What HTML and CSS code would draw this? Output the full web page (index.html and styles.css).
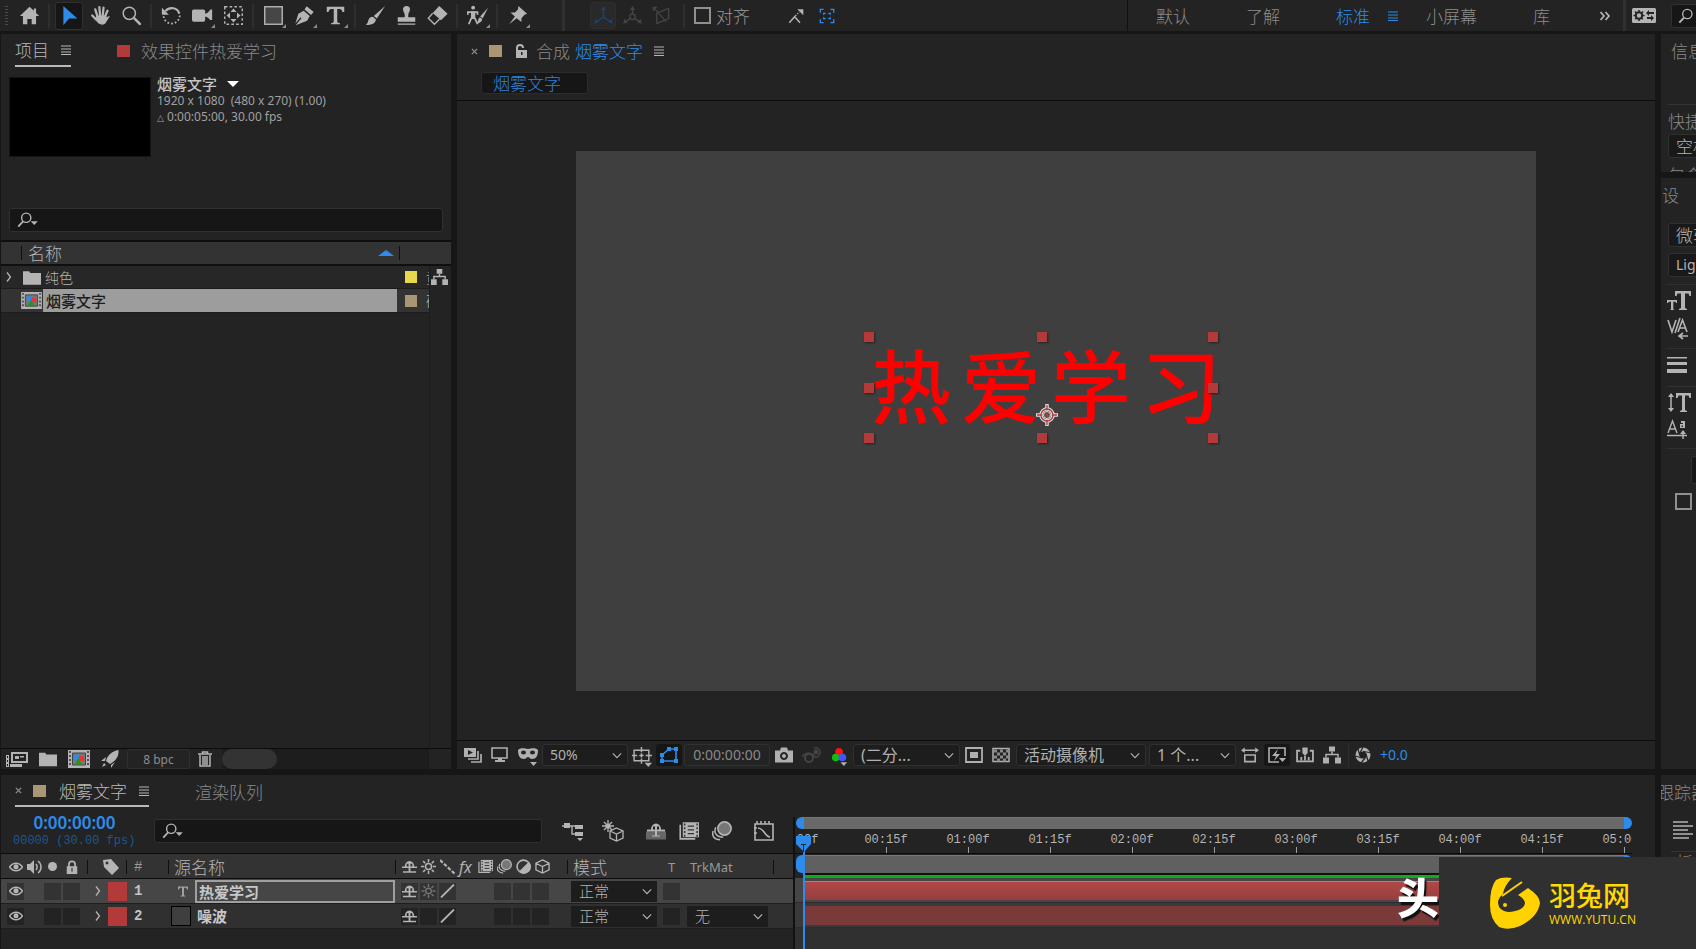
FILE: index.html
```html
<!DOCTYPE html>
<html lang="zh-CN">
<head>
<meta charset="utf-8">
<title>烟雾文字</title>
<link rel="stylesheet" href="styles.css">
</head>
<body>
<svg class="defs" aria-hidden="true">
  <symbol id="home" viewBox="0 0 24 24"><path fill="currentColor" d="M12 2 1 12.5h3.500V22h5v-6h5v6h5v-9.500H23L19.500 9V4H17v2.500z"/></symbol>
  <symbol id="arrow" viewBox="0 0 24 24"><path fill="currentColor" d="M5 1v22l6.500-7.500H21z"/></symbol>
  <symbol id="hand" viewBox="0 0 24 24"><path fill="none" stroke="currentColor" stroke-width="2.600" stroke-linecap="round" d="M8.500 13 6 5M11.500 12l-.8-9.500M14.500 12l1-9M17 13.500l3-7M7.500 17 2.500 12"/><path fill="currentColor" d="M7 12h11.500l.5 2 3-1.500c1 .5 0 1.500-1 3-2 3-3 7-7 7-3 0-5.500-1.500-7-5z"/></symbol>
  <symbol id="lens" viewBox="0 0 24 24"><circle cx="9.500" cy="9.500" r="7" fill="none" stroke="currentColor" stroke-width="1.700"/><path stroke="currentColor" stroke-width="3" stroke-linecap="round" d="m15.500 15.500 6 6"/></symbol>
  <symbol id="rotate" viewBox="0 0 24 24"><path fill="none" stroke="currentColor" stroke-width="2.400" d="M5 7C10 1.500 19 3 21 10"/><path fill="none" stroke="currentColor" stroke-width="2" stroke-dasharray="2 2.300" d="M21.500 12C21 20 12 24 6 19c-2-2-3-4-3-7"/><path fill="currentColor" d="M1 3v8h8z"/></symbol>
  <symbol id="camera" viewBox="0 0 24 24"><rect x="0" y="5" width="15" height="14" rx="2" fill="currentColor"/><path fill="currentColor" d="M14 10c3 0 5-2 7-5h2v12h-2c-2-2-4-4-7-4z"/></symbol>
  <symbol id="panb" viewBox="0 0 24 24"><path fill="none" stroke="currentColor" stroke-width="1.600" stroke-dasharray="3 2.500" d="M2 2h20v20H2z"/><path fill="currentColor" d="m12 4 3.500 4h-7zM12 20l3.500-4h-7zM4 12l4-3.500v7zM20 12l-4-3.500v7z"/></symbol>
  <symbol id="rect" viewBox="0 0 24 24"><rect x="2" y="2" width="20" height="20" fill="#464646" stroke="currentColor" stroke-width="1.600"/></symbol>
  <symbol id="pen" viewBox="0 0 24 24"><path fill="currentColor" d="M14.500 1.500 22.500 8l-3 3.500-7.500-6.500zM11 6.500l7 6L15 18 2 23l6.500-8-1-1L1.500 21 5 10z"/></symbol>
  <symbol id="type" viewBox="0 0 24 24"><path fill="currentColor" d="M2 2h20v6h-2c-.5-2.500-1.500-3.500-3.500-3.500h-2.500v14c0 1.500 1 2 3 2V22H7v-1.500c2 0 3-.5 3-2v-14H7.500C5.500 4.500 4.500 5.500 4 8H2z"/></symbol>
  <symbol id="brush" viewBox="0 0 24 24"><path fill="currentColor" d="M23 1 13.500 15.500 10 12.500zM9 13.500l3.500 3C12 21 7 23.500 1 22.500c3-2 2-4 3.500-6.500C5.500 14.500 7 13.500 9 13.500z"/></symbol>
  <symbol id="stamp" viewBox="0 0 24 24"><path fill="currentColor" d="M12 1a4 4 0 0 1 4 4c0 2-2 4-2 6v3h8v5H2v-5h8v-3c0-2-2-4-2-6a4 4 0 0 1 4-4zM2 21h20v1.500H2z"/></symbol>
  <symbol id="eraser" viewBox="0 0 24 24"><path fill="currentColor" d="m14 1 9.500 9L16 17.500 6.500 9z"/><path fill="none" stroke="currentColor" stroke-width="1.600" d="M6.500 9.500 1.500 15l7 7 6-6"/></symbol>
  <symbol id="roto" viewBox="0 0 24 24"><circle cx="7" cy="3" r="2.200" fill="currentColor"/><path fill="none" stroke="currentColor" stroke-width="2" d="M1 11V8h11v3M2 22l3-7M12 22l-3-7"/><path fill="currentColor" d="M4.500 7h5v9h-5zM24 3 18 15l-3-2zM14.500 14l3 2c-1 4-4 5-6 5 1-2 1-5 3-7z"/></symbol>
  <symbol id="pin" viewBox="0 0 24 24"><path fill="currentColor" d="M13 1 23 10l-3 1-3.500 4 0 4.500L11 15 2.500 22 9 13 4 8.500h5L12.500 5z"/></symbol>
  <symbol id="axis" viewBox="0 0 24 24"><path fill="none" stroke="currentColor" stroke-width="1.800" d="M12 4v10M12 14 3 20M12 14l9 6"/><path fill="currentColor" d="m12 0 3.500 5h-7zM0 22l2-6 4 5zM24 22l-2-6-4 5z"/></symbol>
  <symbol id="axis2" viewBox="0 0 24 24"><path fill="none" stroke="currentColor" stroke-width="1.800" d="M12 4v6M9 16l-6 4M15 16l6 4"/><circle cx="12" cy="13.500" r="3.500" fill="none" stroke="currentColor" stroke-width="1.800"/><path fill="currentColor" d="m12 0 3.500 5h-7zM0 22l2-6 4 5zM24 22l-2-6-4 5z"/></symbol>
  <symbol id="axis3" viewBox="0 0 24 24"><path fill="none" stroke="currentColor" stroke-width="1.700" d="M6 9 21 3v13L6 22zM3 3l15 17"/><path fill="currentColor" d="M1 1h6L1 7z"/></symbol>
  <symbol id="snap" viewBox="0 0 24 24"><path fill="none" stroke="currentColor" stroke-width="2.200" d="m2 22 8-9 8 9"/><path fill="none" stroke="currentColor" stroke-width="2" stroke-dasharray="2 2" d="m11 12 6-6"/><path fill="currentColor" d="M14 2h9v9z"/></symbol>
  <symbol id="grid4" viewBox="0 0 24 24"><path fill="none" stroke="currentColor" stroke-width="2" d="M2 7V2h5M17 2h5v5M22 17v5h-5M7 22H2v-5M7 10V8h3M14 8h3v2M17 14v2h-3M10 16H7v-2"/></symbol>
  <symbol id="more" viewBox="0 0 24 24"><path fill="none" stroke="currentColor" stroke-width="3.500" d="m3 4 7 8-7 8M13 4l7 8-7 8"/></symbol>
  <symbol id="wset" viewBox="0 0 24 15"><rect width="24" height="15" rx="1.500" fill="#b4b4b4"/><circle cx="7" cy="7.500" r="3.200" fill="none" stroke="#232323" stroke-width="2"/><path stroke="#232323" stroke-width="1.500" stroke-dasharray="2 7" d="M7 2v11M1.500 7.500h11M3 3.500l8 8M11 3.500l-8 8"/><path fill="#232323" d="m14 5 3-3v2h5v2h-5v2zM22 10l-3-3v2h-4v2h4v2z"/></symbol>
  <symbol id="find" viewBox="0 0 24 18"><circle cx="10" cy="6.500" r="5.200" fill="none" stroke="currentColor" stroke-width="1.600"/><path stroke="currentColor" stroke-width="2" d="M6.500 10.500 1 16.500"/><path fill="currentColor" d="M15 10.500h8l-4 4z"/></symbol>
  <symbol id="lensr" viewBox="0 0 24 24"><circle cx="14" cy="9" r="7" fill="none" stroke="currentColor" stroke-width="2"/><path stroke="currentColor" stroke-width="3" d="m9 14.500-7 7.500"/></symbol>
  <symbol id="menu" viewBox="0 0 10 10"><path stroke="currentColor" stroke-width="1.200" d="M0 1h10M0 4h10M0 7h10M0 9.500h10"/></symbol>
  <symbol id="chev" viewBox="0 0 12 8"><path fill="none" stroke="currentColor" stroke-width="1.400" d="m1 1.500 5 5 5-5"/></symbol>
  <symbol id="chevr" viewBox="0 0 8 12"><path fill="none" stroke="currentColor" stroke-width="1.300" d="m2 1.500 3.500 4.500L2 10.500"/></symbol>
  <symbol id="close" viewBox="0 0 8 8"><path stroke="currentColor" stroke-width="1.600" d="m1 1 6 6M7 1 1 7"/></symbol>
  <symbol id="unlock" viewBox="0 0 14 14"><path fill="none" stroke="currentColor" stroke-width="2" d="M3 6V4a3 3 0 0 1 6 0"/><path fill="currentColor" fill-rule="evenodd" d="M2 6h11v8H2zM7 8v3h1.500V8z"/></symbol>
  <symbol id="lock" viewBox="0 0 14 16"><path fill="none" stroke="currentColor" stroke-width="2" d="M3.500 8V5a3.500 3.500 0 0 1 7 0v3"/><path fill="currentColor" fill-rule="evenodd" d="M1 7h12v9H1zM6.300 9v4h1.400V9z"/></symbol>
  <symbol id="folder" viewBox="0 0 20 16"><path fill="currentColor" d="M0 1h7l1 2h12v13H0z"/></symbol>
  <symbol id="comp" viewBox="0 0 22 18"><path fill="#b4b4b4" d="M0 0h22v18H0z"/><path stroke="#333" stroke-width="1.500" stroke-dasharray="2 2" d="M2 1v16M20 1v16"/><path fill="#777" stroke="#444" d="M4.500 3h13v12h-13z"/><circle cx="8.500" cy="7" r="2.800" fill="#2d8ceb"/><path fill="#e33" d="M11 6h5v5h-5z"/><path fill="#1a9a1a" d="m10.500 8 3.500 6.500H7z"/></symbol>
  <symbol id="tree" viewBox="0 0 18 17"><path fill="currentColor" d="M6 0h6v5H6zM0 11h6v6H0zM12 11h6v6h-6z"/><path fill="none" stroke="currentColor" stroke-width="1.500" d="M9 5v3M3 11V8h12v3"/></symbol>
  <symbol id="footage" viewBox="0 0 22 16"><path fill="none" stroke="currentColor" stroke-width="2" d="M6 2h15v9H6z"/><path fill="currentColor" d="M9 5h4v3H9zM14 5h4v1.500h-4zM0 4h3v12H0zM4 13h12v3H4z"/><path stroke="#232323" stroke-dasharray="2 2" d="M1.500 5v11"/></symbol>
  <symbol id="rocket" viewBox="0 0 18 18"><path fill="currentColor" d="M17.500 0C18 6 15 11 9 14l-4-3C6 6 11 1 17.500 0zM5 7 0 11h4zM10 15v3l4-6zM3 13l2 2-4 2z"/></symbol>
  <symbol id="trash" viewBox="0 0 14 16"><path fill="none" stroke="currentColor" stroke-width="1.500" d="M0 3h14M4.500 3V1h5v2M2 4v11h10V4M5 5v9M7 5v9M9 5v9"/></symbol>
  <symbol id="stack" viewBox="0 0 18 16"><path fill="currentColor" fill-rule="evenodd" d="M0 1h12v9H0zM4 3v5l5-2.500z"/><path fill="none" stroke="currentColor" stroke-width="1.700" d="M14 4v8H4M17 7v8H7"/></symbol>
  <symbol id="monitor" viewBox="0 0 18 16"><path fill="none" stroke="currentColor" stroke-width="1.600" d="M1 1h15v10H1z"/><path fill="currentColor" d="M7 11h4v2h3v2H4v-2h3z"/></symbol>
  <symbol id="mask" viewBox="0 0 20 18"><path fill="currentColor" fill-rule="evenodd" d="M0 2C4-1 7 1 10 1s6-2 10 1c0 6-2 9-6 9-2 0-3-2-4-2s-2 2-4 2C2 11 0 8 0 2zm3 2.500a2.500 2 0 1 0 5 0 2.500 2 0 1 0-5 0zm9 0a2.500 2 0 1 0 5 0 2.500 2 0 1 0-5 0zM12 14h7l-3.500 4z"/></symbol>
  <symbol id="safe" viewBox="0 0 19 19"><path fill="none" stroke="currentColor" stroke-width="1.400" d="M2 3h14v10H2zM9 0v5M9 11v5M0 8h5M13 8h6M7 8h4M9 6v4"/><path fill="currentColor" d="M12 15h7l-3.500 4z"/></symbol>
  <symbol id="shape" viewBox="0 0 18 16"><path fill="none" stroke="currentColor" stroke-width="1.600" d="M2 14h14V2H9L2 8z"/><path fill="currentColor" d="M0 12h4v4H0zM14 12h4v4h-4zM14 0h4v4h-4zM7 0h4v4H7zM0 6h4v4H0z"/></symbol>
  <symbol id="photo" viewBox="0 0 18 15"><path fill="currentColor" fill-rule="evenodd" d="M0 3h5l1-3h6l1 3h5v12H0zM9 4.500a4 4 0 1 0 .01 0zM9 6.500a2 2 0 1 1-.01 0z"/></symbol>
  <symbol id="ghost" viewBox="0 0 20 16"><circle cx="7" cy="11" r="4" fill="none" stroke="currentColor" stroke-width="2"/><path fill="none" stroke="currentColor" stroke-width="1.500" d="M0 10c3-5 10-5 13 0M13 10c3 1 5-2 5-5s-3-5-6-4"/><circle cx="14" cy="5" r="2.500" fill="currentColor"/></symbol>
  <symbol id="rgb" viewBox="0 0 17 19"><circle cx="7.500" cy="4" r="4" fill="#f11"/><circle cx="4" cy="10" r="4" fill="#1b1"/><circle cx="11" cy="10" r="4" fill="#45f"/><path fill="currentColor" d="M9 15h7l-3.500 4z"/></symbol>
  <symbol id="roi" viewBox="0 0 18 16"><path fill="none" stroke="currentColor" stroke-width="1.800" d="M1 1h16v14H1z"/><path fill="currentColor" d="M5 5h8v6H5z"/></symbol>
  <symbol id="check" viewBox="0 0 18 15"><path fill="none" stroke="currentColor" stroke-width="1.500" d="M1 1h16v13H1z"/><path stroke="#888" stroke-width="3" stroke-dasharray="3 3" d="M2 3.500h15M5 6.500h12M2 9.500h15M5 12.500h12"/></symbol>
  <symbol id="par" viewBox="0 0 19 16"><path fill="none" stroke="currentColor" stroke-width="1.700" d="M2 3h15M4 8h11v7H4z"/><path fill="currentColor" d="m0 3 4-3v6zM19 3l-4-3v6z"/></symbol>
  <symbol id="fast" viewBox="0 0 18 16"><path fill="none" stroke="currentColor" stroke-width="1.600" d="M11 15H1V1h16v8"/><path fill="currentColor" d="m10 2-6 7h4l-2 5 6-7H8zM11 11h7l-3.500 4z"/></symbol>
  <symbol id="tlbtn" viewBox="0 0 17 14"><path fill="none" stroke="currentColor" stroke-width="1.700" d="M4 3H1v10h15V3h-3M5 9v3M8.500 8v4M12 9v3"/><path fill="currentColor" d="M6 0h5v5L8.500 8 6 5z"/></symbol>
  <symbol id="shutter" viewBox="0 0 16 16"><circle cx="8" cy="8" r="5.500" fill="none" stroke="currentColor" stroke-width="4"/><path stroke="#232323" stroke-width="1.200" d="M5 6 8 0M8 4.500l7 1M11 7l2 7M10.500 10.500 6 16M7 11 0 9M5 9 3 2"/></symbol>
  <symbol id="eye" viewBox="0 0 14 10"><path fill="none" stroke="currentColor" stroke-width="1.500" d="M.5 5C4 0 10 0 13.500 5 10 10 4 10 .5 5z"/><circle cx="7" cy="4.800" r="2.500" fill="currentColor"/></symbol>
  <symbol id="sound" viewBox="0 0 16 14"><path fill="currentColor" d="M0 4h3l4-4v14l-4-4H0z"/><path fill="none" stroke="currentColor" stroke-width="1.500" d="M9 4c1.500 2 1.500 4 0 6M11 1c4 3 4 9 0 12"/></symbol>
  <symbol id="tag" viewBox="0 0 16 16"><path fill="currentColor" fill-rule="evenodd" d="M0 1 8 0l8 9-7 7-8-8zM4 2.500a1.500 1.500 0 1 0 .01 0z"/></symbol>
  <symbol id="shy" viewBox="0 0 16 14"><path fill="currentColor" fill-rule="evenodd" d="M3 7a5 6 0 0 1 10 0h3v1.500H9V12h6v1.600H1V12h6V8.500H0V7zM5 4v3h2V4zM9 4v3h2V4z"/></symbol>
  <symbol id="sun" viewBox="0 0 14 14"><circle cx="7" cy="7" r="2.800" fill="none" stroke="currentColor" stroke-width="1.400"/><path stroke="currentColor" stroke-width="1.400" d="M7 0v3M7 11v3M0 7h3M11 7h3M2 2l2 2M10 10l2 2M12 2l-2 2M4 10l-2 2"/></symbol>
  <symbol id="qual" viewBox="0 0 14 14"><path fill="none" stroke="currentColor" stroke-width="2" stroke-dasharray="3.500 1.500" d="m0 1 14 13"/></symbol>
  <symbol id="slash" viewBox="0 0 14 14"><path fill="none" stroke="currentColor" stroke-width="1.800" d="M.5 13.500 13.500.5"/></symbol>
  <symbol id="film" viewBox="0 0 16 14"><path fill="currentColor" d="M3 0h13v12H3z"/><path stroke="#333" stroke-width="1.200" stroke-dasharray="1.500 1.500" d="M4.500 1v10.500M14.500 1v10.500"/><path fill="none" stroke="#333" stroke-width="1" d="M7 3h5M7 6h5M7 9h5"/><path fill="none" stroke="currentColor" stroke-width="1.300" d="M1 2v11.300h12"/></symbol>
  <symbol id="blur" viewBox="0 0 16 16"><circle cx="10" cy="6" r="5.300" fill="#777" stroke="currentColor" stroke-width="1.300"/><path fill="none" stroke="currentColor" stroke-width="1.200" d="M3 5c-2 5 1 8 6 8M1 8c-1.500 4 1 7 5.500 7"/></symbol>
  <symbol id="adj" viewBox="0 0 14 14"><circle cx="7" cy="7" r="6" fill="none" stroke="currentColor" stroke-width="1.500"/><path fill="currentColor" d="M12 2.500A6.500 6.500 0 0 1 2.500 12z"/></symbol>
  <symbol id="cube" viewBox="0 0 16 16"><path fill="none" stroke="currentColor" stroke-width="1.400" d="m8 1 7 3.500v7L8 15l-7-3.500v-7zM1 4.500 8 8l7-3.500M8 8v7"/></symbol>
  <symbol id="flow" viewBox="0 0 22 20"><path fill="currentColor" d="M2 2h6v5H2zM13 4h8v4h-8zM13 11h8v4h-8zM15 17h6l-3 3z"/><path fill="none" stroke="currentColor" stroke-width="1.400" d="M0 5h13M10 5v8h3"/></symbol>
  <symbol id="draft" viewBox="0 0 22 22"><circle cx="6" cy="6" r="2.500" fill="currentColor"/><path fill="none" stroke="currentColor" stroke-width="1.300" d="M6 0v12M0 6h12M2 2l8 8M10 2l-8 8M14.500 8l6.500 3v7l-6.500 3L8 18v-7zM8 11l6.500 3 6.500-3M14.500 14v7"/></symbol>
  <symbol id="shyg" viewBox="0 0 20 17"><path fill="#666" d="M0 9h20v8H0z"/><path fill="currentColor" fill-rule="evenodd" d="M5 7a5 6 0 0 1 10 0h4v2h-8v4h3v1H6v-1h3V9H1V7zM7 4v3h2V4zM11 4v3h2V4z"/></symbol>
  <symbol id="graph" viewBox="0 0 20 20"><path fill="none" stroke="currentColor" stroke-width="1.600" d="M1 3h18v16H1zM3 0v3M7 0v3M11 0v3M15 0v3M0 7h3M0 12h3M4 7c6 0 7 9 12 9"/></symbol>
  <symbol id="lines" viewBox="0 0 20 18"><path stroke="currentColor" stroke-width="1.600" d="M0 1h15M0 5h20M0 9h15M0 13h20M0 17h16"/></symbol>
</svg>

<header class="toolbar">
  <i class="grip"></i>
  <div class="tools">
    <button aria-label="主页"><svg><use href="#home"/></svg></button><i class="sep"></i>
    <button class="on" aria-label="选取"><svg><use href="#arrow"/></svg></button>
    <button aria-label="手形"><svg><use href="#hand"/></svg></button>
    <button aria-label="缩放"><svg><use href="#lens"/></svg></button><i class="sep"></i>
    <button aria-label="旋转"><svg><use href="#rotate"/></svg></button>
    <button class="sub" aria-label="摄像机"><svg><use href="#camera"/></svg></button>
    <button aria-label="锚点"><svg><use href="#panb"/></svg></button><i class="sep"></i>
    <button class="sub" aria-label="矩形"><svg><use href="#rect"/></svg></button>
    <button class="sub" aria-label="钢笔"><svg><use href="#pen"/></svg></button>
    <button class="sub" aria-label="文字"><svg><use href="#type"/></svg></button><i class="sep"></i>
    <button aria-label="画笔"><svg><use href="#brush"/></svg></button>
    <button aria-label="图章"><svg><use href="#stamp"/></svg></button>
    <button aria-label="橡皮擦"><svg><use href="#eraser"/></svg></button><i class="sep"></i>
    <button class="sub" aria-label="笔刷"><svg><use href="#roto"/></svg></button><i class="sep"></i>
    <button class="sub" aria-label="操控点"><svg><use href="#pin"/></svg></button>
  </div>
  <i class="bar"></i>
  <div class="axes">
    <button class="ax" aria-label="本地轴"><svg><use href="#axis"/></svg></button>
    <button aria-label="世界轴"><svg><use href="#axis2"/></svg></button>
    <button aria-label="视图轴"><svg><use href="#axis3"/></svg></button>
  </div>
  <i class="sep"></i>
  <label class="align"><input type="checkbox">对齐</label>
  <div class="snaps">
    <button aria-label="边缘"><svg><use href="#snap"/></svg></button>
    <button class="blue" aria-label="网格"><svg><use href="#grid4"/></svg></button>
  </div>
  <nav class="spaces">
    <button>默认</button><button>了解</button>
    <button class="cur">标准<svg class="menu"><use href="#menu"/></svg></button>
    <button>小屏幕</button><button>库</button>
    <button class="morebtn" aria-label="更多"><svg class="i12"><use href="#more"/></svg></button>
    <i class="bar"></i>
    <button class="wset" aria-label="工作区设置"><svg><use href="#wset"/></svg></button>
    <button class="help" aria-label="搜索帮助"><svg class="i16"><use href="#lensr"/></svg></button>
  </nav>
</header>

<main class="upper">
  <section class="panel project">
    <div class="tabs">
      <span class="tab active">项目<svg class="menu"><use href="#menu"/></svg></span>
      <span class="tab second"><i class="sw red"></i>效果控件热爱学习</span>
    </div>
    <div class="info">
      <div class="thumb"></div>
      <div class="meta">
        <div class="title">烟雾文字<i class="tri"></i></div>
        <div>1920 x 1080&nbsp; (480 x 270) (1.00)</div>
        <div><small>△</small> 0:00:05:00, 30.00 fps</div>
      </div>
    </div>
    <label class="search"><svg class="find"><use href="#find"/></svg><input type="text" aria-label="搜索项目"></label>
    <div class="listhead"><i></i><span>名称</span><b class="up"></b><i></i></div>
    <div class="list">
      <div class="rows">
        <div class="item"><svg class="tw"><use href="#chevr"/></svg><svg class="fold"><use href="#folder"/></svg><span class="nm">纯色</span><i class="lab yellow"></i><span class="kind">黄</span></div>
        <div class="item sel"><i class="tw"></i><svg class="fold"><use href="#comp"/></svg><span class="nm">烟雾文字</span><i class="lab tan"></i><span class="kind">砂</span></div>
      </div>
      <div class="side"><svg class="tree"><use href="#tree"/></svg></div>
    </div>
    <div class="foot">
      <button aria-label="解释素材"><svg class="w22"><use href="#footage"/></svg></button>
      <button aria-label="新建文件夹"><svg class="i18"><use href="#folder"/></svg></button>
      <button aria-label="新建合成"><svg class="w22"><use href="#comp"/></svg></button>
      <button aria-label="项目设置"><svg class="i18"><use href="#rocket"/></svg></button>
      <button class="bpc">8 bpc</button>
      <button aria-label="删除"><svg class="i16"><use href="#trash"/></svg></button>
      <div class="scroll"><i></i></div>
    </div>
  </section>

  <section class="panel viewer">
    <div class="tabs">
      <button class="x" aria-label="关闭"><svg><use href="#close"/></svg></button><i class="sw tan"></i>
      <svg class="i14"><use href="#unlock"/></svg><span class="lbl">合成</span><span class="blue">烟雾文字</span><svg class="menu lit"><use href="#menu"/></svg>
    </div>
    <div class="crumbs"><button>烟雾文字</button></div>
    <div class="stage">
      <div class="frame">
        <div class="textlayer">
          <span>热</span><span>爱</span><span>学</span><span>习</span>
          <i class="h tl"></i><i class="h tc"></i><i class="h tr"></i><i class="h ml"></i><i class="h mr"></i><i class="h bl"></i><i class="h bc"></i><i class="h br"></i>
          <svg class="anchor" viewBox="0 0 22 22"><g fill="none" stroke="#ddd" stroke-width="3.500"><circle cx="11" cy="11" r="6"/><path d="M11 0v6M11 16v6M0 11h6M16 11h6"/></g><g fill="none" stroke="#b43a3a" stroke-width="1.300"><circle cx="11" cy="11" r="6"/><path d="M11 1v5M11 16v5M1 11h5M16 11h5"/></g><circle cx="11" cy="11" r="3.500" fill="#555" stroke="#ddd"/><circle cx="11" cy="11" r="1.500" fill="#b43a3a"/></svg>
        </div>
      </div>
    </div>
    <div class="vbar">
      <button aria-label="预览"><svg class="i18"><use href="#stack"/></svg></button>
      <button aria-label="显示器"><svg class="i18"><use href="#monitor"/></svg></button>
      <button class="low" aria-label="视图"><svg class="i20"><use href="#mask"/></svg></button>
      <label class="dd zoomdd"><select aria-label="放大率"><option>50%</option></select><svg><use href="#chev"/></svg></label>
      <button class="low" aria-label="安全框"><svg class="i20"><use href="#safe"/></svg></button>
      <button class="dark blue" aria-label="蒙版"><svg class="i18"><use href="#shape"/></svg></button>
      <button class="time">0:00:00:00</button>
      <button aria-label="快照"><svg class="i18"><use href="#photo"/></svg></button>
      <button class="off" aria-label="显示快照"><svg class="i20"><use href="#ghost"/></svg></button>
      <button class="low" aria-label="通道"><svg class="i18"><use href="#rgb"/></svg></button>
      <label class="dd resdd"><select aria-label="分辨率"><option>(二分...</option></select><svg><use href="#chev"/></svg></label>
      <button aria-label="目标区域"><svg class="i18"><use href="#roi"/></svg></button>
      <button class="checker" aria-label="透明网格"><svg class="i18"><use href="#check"/></svg></button>
      <label class="dd camdd"><select aria-label="摄像机"><option>活动摄像机</option></select><svg><use href="#chev"/></svg></label>
      <label class="dd viewdd"><select aria-label="视图布局"><option>1 个...</option></select><svg><use href="#chev"/></svg></label>
      <button aria-label="像素长宽比"><svg class="i18"><use href="#par"/></svg></button>
      <button class="dark fast" aria-label="快速预览"><svg class="i18"><use href="#fast"/></svg></button>
      <button aria-label="时间轴"><svg class="i18"><use href="#tlbtn"/></svg></button>
      <button aria-label="流程图"><svg class="i18"><use href="#tree"/></svg></button>
      <i class="vsep"></i>
      <button aria-label="曝光"><svg class="i16"><use href="#shutter"/></svg></button>
      <span class="blue">+0.0</span>
    </div>
  </section>

  <aside class="right">
    <section class="panel r1">
      <div class="rt">信息</div>
      <div class="quick">快捷</div>
      <div class="rbox">空格</div>
      <div class="cut">包含</div>
    </section>
    <section class="panel r2">
      <div class="preset">设</div>
      <div class="rbox font">微软</div>
      <div class="rbox light">Light</div>
      <div class="g"><svg class="i24" viewBox="0 0 24 20"><path fill="currentColor" d="M8 0h16v5h-1.500l-1-2.500H18V17l2 1v1h-8v-1l2-1V2.500h-3.500L9.500 5H8zM0 9h10v3H9l-.5-1.300H6.300V18l1 1H3l1-1v-7.300H1.800L1 12H0z"/></svg>
      <svg class="i22" viewBox="0 0 22 22"><path fill="none" stroke="currentColor" stroke-width="1.600" d="m1 2 4 12L9 2M13 0 8 15M11 14l4.500-12L20 14M12.500 10h6M13 18h8M16 15l-4 3 4 3"/></svg></div>
      <div class="g one"><svg class="i20" viewBox="0 0 20 16"><path fill="currentColor" d="M0 0h20v1.500H0zM0 5h20v3H0zM0 12h20v4H0z"/></svg></div>
      <div class="g"><svg class="i24" viewBox="0 0 24 20"><path fill="none" stroke="currentColor" stroke-width="1.500" d="M4 2v15"/><path fill="currentColor" d="m4 0 3 4H1zM4 19l3-4H1zM9 0h15v5h-1.500l-1-2.500H18V17l2 1v1h-7v-1l2-1V2.500h-3.500l-1 2.500H9z"/></svg>
      <svg class="i20" viewBox="0 0 20 20"><path fill="none" stroke="currentColor" stroke-width="1.400" d="m1 13 4.500-12L10 13M2.500 9h6M0 15.500h20M16 19v-8"/><path fill="currentColor" d="m16 10 3 4h-6zM14 1h4v7h-5V4h3V3h-2zM14.500 5.500V7H16V5.500z"/></svg></div>
      <div class="nib"></div>
      <input class="sqbox" type="checkbox" aria-label="连字">
    </section>
  </aside>
</main>

<footer class="lower">
  <section class="panel timeline">
    <div class="tleft">
      <div class="tabs">
        <span class="tab active"><button class="x" aria-label="关闭"><svg><use href="#close"/></svg></button><i class="sw tan"></i>烟雾文字<svg class="menu"><use href="#menu"/></svg></span>
        <span class="tab queue">渲染队列</span>
      </div>
      <div class="controls">
        <div class="clock"><strong>0:00:00:00</strong><span>00000 (30.00 fps)</span></div>
        <label class="search"><svg class="find"><use href="#find"/></svg><input type="text" aria-label="搜索图层"></label>
        <div class="tbtns">
          <button aria-label="迷你流程图"><svg class="i22"><use href="#flow"/></svg></button>
          <button class="b2" aria-label="草图 3D"><svg class="i22"><use href="#draft"/></svg></button>
          <button aria-label="消隐"><svg class="i20"><use href="#shyg"/></svg></button>
          <button aria-label="帧混合"><svg class="i20"><use href="#film"/></svg></button>
          <button class="b2" aria-label="运动模糊"><svg class="i20"><use href="#blur"/></svg></button>
          <button aria-label="图表编辑器"><svg class="i20"><use href="#graph"/></svg></button>
        </div>
      </div>
      <div class="lrow lhead">
        <div class="c av"><svg class="i14"><use href="#eye"/></svg><svg class="i16"><use href="#sound"/></svg><i class="dot"></i><svg class="i14"><use href="#lock"/></svg></div>
        <div class="c ctag dv"><svg class="i16"><use href="#tag"/></svg></div>
        <div class="c num dv">#</div>
        <div class="c nameh dv">源名称</div>
        <div class="c swh dv"><svg><use href="#shy"/></svg><svg><use href="#sun"/></svg><svg><use href="#qual"/></svg><em>fx</em><svg><use href="#film"/></svg><svg><use href="#blur"/></svg><svg><use href="#adj"/></svg><svg><use href="#cube"/></svg></div>
        <div class="c mode dv">模式</div>
        <div class="c lat">T</div>
        <div class="c lat">TrkMat</div>
        <div class="c dv"></div>
      </div>
      <div class="lrow l1">
        <div class="c av"><button class="cell" aria-label="可见"><svg class="i14"><use href="#eye"/></svg></button><i class="gap"></i><i class="cell"></i><i class="cell"></i></div>
        <div class="c ctag"><svg class="tw"><use href="#chevr"/></svg><i class="chip"></i></div>
        <div class="c num">1</div>
        <div class="c name"><svg class="tt"><use href="#type"/></svg><input type="text" value="热爱学习" aria-label="图层名称"></div>
        <div class="c swc"><i class="cell"><svg><use href="#shy"/></svg></i><i class="cell"><svg class="dim"><use href="#sun"/></svg></i><i class="cell"><svg><use href="#slash"/></svg></i><i class="gap2"></i><i class="cell"></i><i class="cell"></i><i class="cell"></i></div>
        <div class="c"><label class="dd flat"><select aria-label="模式"><option>正常</option></select><svg><use href="#chev"/></svg></label></div>
        <div class="c"><i class="cell"></i></div>
        <div class="c"></div><div class="c"></div>
      </div>
      <div class="lrow l2">
        <div class="c av"><button class="cell" aria-label="可见"><svg class="i14"><use href="#eye"/></svg></button><i class="gap"></i><i class="cell"></i><i class="cell"></i></div>
        <div class="c ctag"><svg class="tw"><use href="#chevr"/></svg><i class="chip"></i></div>
        <div class="c num">2</div>
        <div class="c name"><i class="solid"></i><span>噪波</span></div>
        <div class="c swc"><i class="cell"><svg><use href="#shy"/></svg></i><i class="cell"></i><i class="cell"><svg><use href="#slash"/></svg></i><i class="gap2"></i><i class="cell"></i><i class="cell"></i><i class="cell"></i></div>
        <div class="c"><label class="dd flat"><select aria-label="模式"><option>正常</option></select><svg><use href="#chev"/></svg></label></div>
        <div class="c"><i class="cell"></i></div>
        <div class="c"><label class="dd flat trk"><select aria-label="轨道遮罩"><option>无</option></select><svg><use href="#chev"/></svg></label></div>
        <div class="c"></div>
      </div>
    </div>
    <div class="tright">
      <div class="navi"><i></i><b></b><i class="e"></i></div>
      <div class="ruler"><div class="marks"><span>:00f</span><span>00:15f</span><span>01:00f</span><span>01:15f</span><span>02:00f</span><span>02:15f</span><span>03:00f</span><span>03:15f</span><span>04:00f</span><span>04:15f</span><span>05:00f</span></div></div>
      <div class="work"><i></i><b></b><i class="e"></i></div>
      <div class="cache"></div>
      <div class="track t1"><div class="clip"></div></div>
      <div class="track t2"><div class="clip"></div></div>
      <div class="rest"></div>
      <div class="playhead"><svg viewBox="0 0 15 17"><path fill="#2d8ceb" d="M0 0h15v8l-7 8L0 8z"/><path stroke="#123" d="M5 8.500h5M7.500 8v8"/></svg></div>
    </div>
  </section>
  <aside class="panel tracker">
    <div class="rt2">跟踪器</div>
    <svg class="i20"><use href="#lines"/></svg>
    <div class="cut2">板</div>
  </aside>
</footer>

<div class="caption">头</div>
<div class="brand">
  <svg viewBox="0 0 51 52"><path fill="#ffd200" d="M22 1Q14 9 13 17 8 21 8 26q1 8 10 9 16-1 17-9-1-5-7-8l10-7q12 8 12 15-2 14-20 23-12 5-21 1Q0 42 0 28 0 10 6 3 12-.5 22 1z"/><path stroke="#ffd200" stroke-width="2" d="M12 19 32 5"/><circle cx="15" cy="28" r="2" fill="#ffd200"/></svg>
  <div><strong>羽兔网</strong><span>WWW.YUTU.CN</span></div>
</div>
</body>
</html>
```

FILE: styles.css
```css
* { box-sizing: border-box; }
body {
  margin: 0;
  height: 100vh;
  display: grid;
  grid-template-rows: auto minmax(0, 1fr) auto;
  gap: 3px;
  overflow: hidden;
  background: #161616;
  color: #b4b4b4;
  font: 300 17px/20px "Noto Sans CJK SC", sans-serif;
}
svg { display: block; flex: none; overflow: visible; }
button, input, select { font: inherit; color: inherit; background: none; border: 0; padding: 0; margin: 0; }
button { display: flex; align-items: center; justify-content: center; flex: none; }
i, em { font-style: normal; display: block; flex: none; }
.defs { position: absolute; width: 0; height: 0; }
.panel { background: #232323; min-width: 0; }
.blue { color: #2d8ceb; }
.menu { width: 10px; height: 10px; }
.i12 { width: 12px; height: 12px; }
.i14 { width: 14px; height: 14px; }
.i16 { width: 16px; height: 16px; }
.i18 { width: 18px; height: 18px; }
.i20 { width: 20px; height: 20px; }
.i22 { width: 22px; height: 22px; }
.i24 { width: 24px; height: 20px; }
.w22 { width: 22px; height: 18px; }

/* toolbar */
.toolbar { height: 31px; display: flex; align-items: center; background: #232323; white-space: nowrap; overflow: hidden; }
.grip { width: 3px; height: 20px; margin-left: 5px; background: repeating-linear-gradient(#4a4a4a 0 1px, #232323 1px 3px); }
.tools { display: flex; align-items: center; gap: 3px; margin-left: 7px; }
.tools button { width: 28px; height: 28px; border-radius: 3px; position: relative; }
.tools button svg { width: 21px; height: 21px; }
.tools .on { background: #161616; color: #2d8ceb; border: 1px solid #303030; }
.tools .sub::after { content: ""; position: absolute; right: 1px; bottom: 2px; border: 2px solid; border-color: transparent #8a8a8a #8a8a8a transparent; }
.sep { width: 2px; height: 24px; margin: 0 2px; background: #2e2e2e; }
.bar { width: 3px; height: 31px; background: #303030; }
.toolbar > .bar { margin-left: 31px; }
.axes { display: flex; gap: 3px; margin: 0 7px 0 25px; color: #444; }
.axes button { width: 26px; height: 27px; border-radius: 3px; }
.axes svg { width: 19px; height: 19px; }
.axes .ax { background: #292929; border: 1px solid #2e2e2e; color: #1e4165; }
.align { display: flex; align-items: center; gap: 5px; margin-left: 7px; color: #9a9a9a; }
.align input { appearance: none; width: 17px; height: 17px; border: 2px solid #909090; }
.snaps { display: flex; gap: 15px; margin-left: 38px; }
.snaps svg { width: 16px; height: 16px; }
.spaces { display: flex; align-items: center; margin-left: auto; border-left: 1px solid #111; padding-left: 28px; height: 31px; color: #8c8c8c; width: 569px; }
.spaces button { margin-right: 56px; }
.spaces .cur { color: #2d8ceb; gap: 18px; margin-right: 28px; }
.spaces .morebtn { margin-right: 12px; color: #b4b4b4; margin-left: -7px; }
.spaces .wset { margin: 0 15px 0 6px; }
.wset svg { width: 24px; height: 15px; }
.spaces .help { width: 40px; height: 24px; justify-content: flex-start; padding-left: 6px; margin: 0; background: #161616; border: 1px solid #303030; border-radius: 3px; color: #b4b4b4; }

/* shared */
.upper { display: grid; grid-template-columns: 450px minmax(0, 1fr) 35px; gap: 6px; padding-left: 1px; margin-bottom: 3px; }
.tabs { display: flex; align-items: center; height: 34px; white-space: nowrap; }
.tab { display: flex; align-items: center; height: 32px; color: #8a8a8a; }
.tab.active { color: #b9b9b9; border-bottom: 2px solid #b9b9b9; gap: 12px; }
.sw { width: 13px; height: 12px; }
.red { background: #b43a3a; }
.tan { background: #a89675; }
.yellow { background: #e6d84a; }
.x svg { width: 7px; height: 7px; }
.x { color: #8a8a8a; }
.search { display: flex; align-items: center; height: 24px; background: #161616; border: 1px solid #303030; border-radius: 3px; padding-left: 7px; }
.search input { flex: 1; min-width: 0; outline: 0; }
.find { width: 22px; height: 16px; }
.dd { position: relative; display: block; flex: none; height: 22px; background: #1d1d1d; border: 1px solid #303030; border-radius: 3px; }
.dd select { appearance: none; width: 100%; height: 100%; padding-left: 7px; display: block; outline: 0; }
.dd option { background: #1d1d1d; }
.dd svg { position: absolute; right: 5px; top: 7px; width: 10px; height: 7px; pointer-events: none; }

/* project */
.project { display: grid; grid-template-rows: auto auto auto auto minmax(0, 1fr) auto; }
.project .tabs { padding-left: 14px; }
.project .tab.second { margin-left: 46px; gap: 11px; }
.info { display: flex; gap: 6px; margin: 9px 0 0 8px; }
.thumb { width: 142px; height: 80px; background: #000; border: 1px solid #151515; }
.meta { font: 400 12px/16px "Noto Sans", sans-serif; color: #a0a0a0; white-space: nowrap; }
.meta small { font: 9px "DejaVu Sans", sans-serif; }
.title { display: flex; align-items: center; gap: 10px; height: 16px; font: 500 15px/12px "Noto Sans CJK SC", sans-serif; color: #c4c4c4; padding-bottom: 3px; }
.tri { border: 6px solid transparent; border-top-color: #fff; border-bottom: 0; }
.project .search { margin: 51px 8px 8px 8px; }
.listhead { display: flex; align-items: center; height: 26px; background: #333; border: solid #0f0f0f; border-width: 2px 0; }
.listhead i { width: 1px; height: 14px; background: #0f0f0f; margin-left: 20px; }
.listhead span { margin-left: 6px; }
.listhead .up { margin-left: auto; border: 8px solid transparent; border-bottom: 6px solid #2d8ceb; border-top: 0; }
.listhead i:last-child { margin: 0 51px 0 5px; }
.list { display: grid; grid-template-columns: 1fr 22px; }
.rows { overflow: hidden; }
.item { display: flex; align-items: center; height: 23px; font-size: 14px; background: #272727; border-bottom: 1px solid #1c1c1c; }
.item .tw { margin: 0 10px 0 4px; }
.tw { width: 8px; height: 12px; }
.fold { width: 18px; height: 15px; }
.item .nm { flex: 1; padding: 0 3px; margin: 0 8px 0 1px; height: 22px; line-height: 22px; }
.sel { background: #333; font-size: 15px; height: 24px; }
.sel .tw { margin-right: 8px; }
.sel .fold { width: 21px; height: 17px; }
.sel .nm { background: #9d9d9d; color: #1c1c1c; font-weight: 500; height: 23px; line-height: 24px; }
.lab { width: 12px; height: 12px; }
.kind { margin-left: 9px; overflow: hidden; width: 3px; }
.side { border-left: 1px solid #1c1c1c; padding: 3px 0 0 1px; }
.tree { width: 17px; height: 16px; }
.foot { display: flex; align-items: center; height: 21px; border-top: 1px solid #0c0c0c; padding-left: 5px; }
.foot button { margin-right: 11px; height: 20px; }
.foot .bpc { width: 63px; border: 1px solid #303030; border-radius: 3px; font: 12px "Noto Sans", sans-serif; color: #8c8c8c; margin: 0 7px 0 -3px; }
.foot button:nth-child(6) { margin-right: 9px; }
.scroll { flex: 1; height: 20px; margin-right: 22px; background: #1d1d1d; }
.scroll i { width: 55px; height: 20px; border-radius: 10px; background: #333; }

/* viewer */
.viewer { display: grid; grid-template-rows: auto auto minmax(0, 1fr) auto; }
.viewer .tabs { padding-left: 14px; }
.viewer .tabs .sw { margin: 0 12px 0 11px; }
.viewer .lbl { margin: 0 5px 0 8px; color: #8a8a8a; }
.menu.lit { margin-left: 11px; }
.crumbs { padding: 4px 0 6px 24px; border-bottom: 1px solid #0c0c0c; }
.crumbs button { width: 107px; height: 22px; padding-left: 11px; justify-content: flex-start; background: #161616; border: 1px solid #2c2c2c; border-radius: 3px; color: #2b84dc; }
.stage { display: flex; justify-content: center; align-items: flex-start; padding: 50px 0 49px; min-height: 0; }
.frame { height: 100%; aspect-ratio: 16 / 9; background: #3f3f3f; display: flex; justify-content: center; align-items: flex-start; }
.textlayer { position: relative; display: flex; gap: 10px; margin: 181px 0 0 -30px; width: 354px; height: 111px; padding: 0 0 0 7px; color: #f00; font: 500 80px/100px "Noto Sans CJK SC", sans-serif; }
.h { position: absolute; width: 10px; height: 10px; background: #b43a3a; box-shadow: 1px 1px 2px #222; }
.tl, .tc, .tr { top: 0; }
.ml, .mr { top: 51px; }
.bl, .bc, .br { bottom: 0; }
.tl, .ml, .bl { left: 0; }
.tc, .bc { left: 173px; }
.tr, .mr, .br { right: 0; }
.anchor { position: absolute; left: 172px; top: 72px; width: 22px; height: 22px; }
.vbar { display: flex; align-items: center; height: 29px; border-top: 1px solid #0c0c0c; padding-left: 7px; color: #b0b0b0; font: 400 14px/20px "Noto Sans", "Noto Sans CJK SC", sans-serif; white-space: nowrap; }
.vbar button { margin-right: 9px; height: 22px; }
.vbar button.blue { color: #2d8ceb; }
.vbar .low { margin-right: 4px; padding-top: 3px; }
.vbar .dark { background: #161616; border-radius: 3px; padding: 0 4px; margin-right: 2px; }
.vbar .time { width: 86px; border: 1px solid #303030; border-radius: 3px; color: #8a8a8a; margin-right: 5px; }
.vbar .off { color: #444; }
.zoomdd { width: 86px; margin-right: 4px; }
.resdd { width: 107px; margin-right: 5px; }
.resdd, .camdd, .viewdd { font-size: 16px; }
.vbar .checker { margin-right: 6px; }
.camdd { width: 130px; margin-right: 3px; }
.viewdd { width: 87px; margin-right: 5px; }
.vbar .fast { margin: 0 6px 0 -4px; }
.vsep { width: 1px; height: 24px; margin: 0 6px 0 -2px; background: #2e2e2e; }

/* right column */
.right { display: grid; grid-template-rows: 138px minmax(0, 1fr); gap: 6px; overflow: hidden; }
.right .panel { overflow: hidden; white-space: nowrap; color: #8a8a8a; }
.rt { margin: 7px 0 0 10px; }
.quick { margin: 43px 0 0 7px; border-top: 1px solid #333; height: 30px; padding-top: 6px; }
.rbox { margin-left: 7px; padding-left: 7px; width: 60px; height: 24px; line-height: 22px; background: #191919; border: 1px solid #303030; border-radius: 3px; color: #b4b4b4; }
.cut { margin: 7px 0 0 7px; }
.preset { margin: 7px 0 18px 1px; }
.light { margin-top: 6px; margin-bottom: 7px; font: 14px/22px "Noto Sans", sans-serif; }
.g { border-top: 1px solid #303030; padding: 6px 0 8px; margin-left: 6px; display: flex; flex-direction: column; gap: 7px; color: #b4b4b4; }
.g.one { padding: 6px 0 11px; }
.nib { margin-left: 6px; height: 33px; border-top: 1px solid #303030; position: relative; }
.nib::after { content: ""; position: absolute; left: 24px; top: 7px; width: 20px; height: 26px; background: #161616; border: 1px solid #303030; border-radius: 3px; }
.sqbox { appearance: none; width: 17px; height: 17px; border: 2px solid #909090; margin: 12px 0 0 14px; }

/* timeline */
.lower { display: grid; grid-template-columns: minmax(0, 1fr) 35px; gap: 6px; padding-left: 1px; min-height: 174px; }
.timeline { display: grid; grid-template-columns: 792px minmax(0, 1fr); }
.tleft .tabs { padding-left: 14px; align-items: flex-start; height: 33px; }
.tleft .tab { padding-top: 1px; }
.tleft .tab.active { gap: 12px; }
.tleft .tab .sw { margin: 0 1px 0 -1px; }
.queue { margin-left: 46px; }
.controls { display: flex; align-items: center; height: 45px; }
.controls .search { width: 388px; margin-top: 1px; }
.clock { width: 131px; padding-left: 12px; margin-right: 22px; }
.clock strong { display: block; width: 123px; font: 600 17px/19px "Noto Sans", sans-serif; color: #2d8ceb; text-align: center; padding-top: 2px; }
.clock span { display: block; width: 123px; font: 12px/18px "Liberation Mono", monospace; color: #1a5796; white-space: nowrap; }
.tbtns { display: flex; margin-left: 20px; align-items: center; gap: 13px; }
.tbtns .b2 { margin-right: 9px; }
.tbtns button:first-child { margin-right: 5px; }
.lrow { display: grid; grid-template-columns: 86px 39px 42px 227px 172px 92px 24px 90px 20px; height: 25px; border-bottom: 1px solid #1e1e1e; }
.lhead { height: 26px; background: #333; border: solid #0c0c0c; border-width: 1px 0; padding-top: 1px; }
.l1 { background: #464646; }
.l2 { background: #303030; }
.c { display: flex; align-items: center; min-width: 0; white-space: nowrap; }
.dv { position: relative; }
.dv::before { content: ""; position: absolute; left: 0; top: 5px; width: 1px; height: 14px; background: #0f0f0f; }
.av { padding-left: 6px; gap: 2px; }
.lhead .av { gap: 4px; padding-left: 8px; }
.lhead .av svg:last-child { margin-left: 4px; }
.dot { width: 9px; height: 9px; border-radius: 50%; background: #b4b4b4; margin-left: 1px; }
.cell { display: flex; align-items: center; justify-content: center; width: 17px; height: 17px; background: #333; }
.l2 .cell { background: #232323; }
.gap { width: 16px; }
.lhead .ctag { padding-left: 16px; }
.ctag { padding-left: 7px; gap: 6px; }
.chip { width: 19px; height: 19px; background: #b43a3a; }
.num { padding-left: 8px; font: 700 14px "Liberation Mono", monospace; color: #c4c4c4; }
.lhead .num { font-weight: 400; color: #999; }
.nameh, .mode { padding-left: 6px; }
.name { gap: 6px; padding-left: 3px; font-size: 15px; font-weight: 700; color: #c8c8c8; }
.tt { width: 12px; height: 13px; margin-left: 6px; color: #a0a0a0; }
.name input { width: 200px; height: 23px; border: 2px solid #a0a0a0; padding-left: 2px; outline: 0; }
.solid { width: 20px; height: 20px; border: 1px solid #000; background: #3f3f3f; }
.swh { gap: 4px; padding-left: 7px; }
.swh svg { width: 15px; height: 15px; }
.swh em { width: 15px; font: italic 16px/20px "Noto Sans", sans-serif; }
.swc { padding-left: 6px; gap: 2px; }
.swc svg { width: 15px; height: 14px; }
.dim { opacity: .5; }
.gap2 { width: 34px; }
.lat { font: 400 13px "Noto Sans", sans-serif; color: #999; padding-left: 7px; }
.flat { width: 86px; height: 21px; border: 0; border-radius: 0; margin-left: 4px; font-size: 15px; }
.flat select { padding-left: 8px; }
.flat.trk { width: 81px; }
.lrow .c:nth-child(7) { padding-left: 4px; }
.lhead .c:nth-child(7) { padding-left: 9px; }

.tright { position: relative; padding: 42px 0 0 2px; display: flex; flex-direction: column; background: linear-gradient(#111, #111) 0 42px / 2px 100% no-repeat; }
.navi, .work { display: flex; height: 12px; margin: 0 23px 0 1px; }
.navi b, .work b { flex: 1; background: #696969; border: solid #777; border-width: 1px 0 0; }
.navi i, .work i { width: 8px; background: #2d8ceb; border-radius: 6px 0 0 6px; }
.navi .e, .work .e { border-radius: 0 6px 6px 0; }
.ruler { height: 25px; margin-right: 23px; overflow: hidden; border-bottom: 1px solid #0c0c0c; }
.marks { display: grid; grid-template-columns: repeat(11, 1fr); margin: 0 -33px 0 -32px; text-align: center; font: 12px/17px "Liberation Mono", monospace; color: #b4b4b4; }
.marks span { padding-top: 3px; background: linear-gradient(#a0a0a0, #a0a0a0) 50% 100% / 1px 7px no-repeat; height: 25px; }
.work { height: 18px; margin-top: 1px; }
.work b { background: #606060; }
.cache { height: 5px; background: #111; border-bottom: 3px solid #14a81e; margin: 0 23px 0 9px; }
.track { height: 25px; padding: 3px 0 2px 9px; border-bottom: 1px solid #2c2c2c; }
.t1 { background: #464646; }
.t2 { background: #3a3a3a; }
.clip { height: 19px; background: #7b3a3a; }
.t1 .clip { background: linear-gradient(#c07a7a 0 1px, #b04848 1px, #963f3f); }
.rest { flex: 1; background: #303030; }
.playhead { position: absolute; left: 3px; top: 61px; bottom: 0; width: 15px; background: linear-gradient(#2d8ceb, #2d8ceb) 7px 0 / 2px 100% no-repeat; }
.playhead svg { width: 15px; height: 17px; }
.tracker { overflow: hidden; white-space: nowrap; color: #8a8a8a; padding-top: 7px; }
.rt2 { margin-left: -4px; width: 60px; }
.tracker svg { margin: 18px 0 0 12px; color: #b4b4b4; }
.cut2 { margin: 11px 0 0 10px; border-top: 1px solid #333; padding-left: 5px; }

/* overlays */
.brand { position: fixed; right: 0; bottom: 0; width: 257px; height: 92px; padding: 20px 0 0 51px; background: #303030; display: flex; gap: 8px; color: #ffd900; }
.brand svg { width: 51px; height: 52px; }
.brand strong { display: block; font: 500 27px/32px "Noto Sans CJK SC", sans-serif; padding-top: 2px; }
.brand span { display: block; font: 400 12px/14px "Open Sans", sans-serif; padding-top: 2px; }
.caption { position: fixed; right: 257px; bottom: 31px; font: 900 42px/44px "Noto Sans CJK SC", sans-serif; color: #fff; text-shadow: 2px 3px 1px #111; }
```
